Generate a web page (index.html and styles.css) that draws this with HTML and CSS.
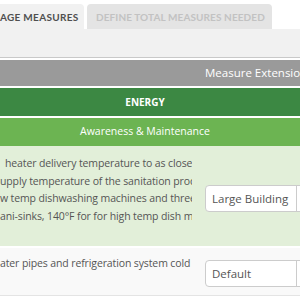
FILE: index.html
```html
<!DOCTYPE html>
<html>
<head>
<meta charset="utf-8">
<link rel="stylesheet" href="styles.css">
</head>
<body>
<div class="page">
  <div class="tabs">
    <div class="tab tab-active">AGE MEASURES</div>
    <div class="tab tab-idle">DEFINE TOTAL MEASURES NEEDED</div>
  </div>
  <div class="panel"></div>
  <div class="bar bar-gray">Measure Extension</div>
  <div class="bar bar-energy">ENERGY</div>
  <div class="bar bar-aware">Awareness &amp; Maintenance</div>
  <div class="row row-green">
    <div class="desc">
      <div class="line line-first">heater delivery temperature to as close</div>
      <div class="line">upply temperature of the sanitation process</div>
      <div class="line">w temp dishwashing machines and three</div>
      <div class="line">ani-sinks, 140°F for for high temp dish machines</div>
    </div>
    <div class="select select-first">
      <span class="select-text">Large Building</span>
      <span class="select-btn"><span class="caret"></span></span>
    </div>
  </div>
  <div class="row row-light">
    <div class="desc">
      <div class="line">ater pipes and refrigeration system cold</div>
    </div>
    <div class="select select-second">
      <span class="select-text">Default</span>
      <span class="select-btn"><span class="caret"></span></span>
    </div>
  </div>
</div>
</body>
</html>
```
FILE: styles.css
```css
html, body {
  margin: 0;
  padding: 0;
  background: #ffffff;
}
.page {
  width: 300px;
  height: 300px;
  overflow: hidden;
  font-family: "Open Sans", "Liberation Sans", sans-serif;
}
.tabs {
  display: flex;
  gap: 3px;
  padding-top: 4px;
  height: 25px;
}
.tab {
  height: 25px;
  box-sizing: border-box;
  border-radius: 4px 4px 0 0;
  font-family: "Lato", "DejaVu Sans", sans-serif;
  font-weight: 700;
  font-size: 10px;
  line-height: 27px;
  white-space: nowrap;
  overflow: hidden;
}
.tab-active {
  width: 84px;
  background: #f1f1f1;
  color: #4f4f4f;
  border-radius: 0 4px 0 0;
  letter-spacing: 0.3px;
}
.tab-idle {
  width: 185px;
  background: #e4e4e4;
  color: #c2c2c2;
  padding-left: 9px;
  letter-spacing: 0.1px;
}
.panel {
  height: 28px;
  background: #f1f1f1;
  border-bottom: 1px solid #c9c9c9;
  margin-bottom: 2px;
}
.bar {
  color: #ffffff;
  font-size: 10.5px;
  white-space: nowrap;
  box-sizing: border-box;
}
.bar-gray {
  height: 26px;
  line-height: 26px;
  background: #9a9a9a;
  padding-left: 205px;
  margin-bottom: 2px;
  font-size: 11.5px;
}
.bar-energy {
  height: 28px;
  line-height: 28px;
  background: #3c8843;
  font-weight: 700;
  font-size: 10px;
  text-align: center;
  padding-right: 10px;
  margin-bottom: 2px;
}
.bar-aware {
  height: 28px;
  line-height: 26px;
  background: #6cb452;
  text-align: center;
  padding-right: 10px;
  border-bottom: 2px solid #6cb452;
}
.row {
  display: flex;
  box-sizing: border-box;
}
.row-green {
  height: 102px;
  background: #e2efd9;
  padding-top: 9px;
  border-bottom: 2px solid #ffffff;
}
.row-light {
  height: 48px;
  background: #f9f9f9;
  padding-top: 7px;
  border-bottom: 1px solid #e4e4e4;
}
.desc {
  width: 192px;
  flex: none;
  overflow: hidden;
  color: #555555;
  font-size: 10.5px;
  line-height: 17.5px;
  letter-spacing: -0.12px;
}
.line {
  white-space: nowrap;
}
.line-first {
  padding-left: 5px;
}
.select {
  flex: none;
  margin-left: 13px;
  width: 120px;
  height: 27px;
  box-sizing: border-box;
  background: #ffffff;
  border: 1px solid #cccccc;
  border-radius: 4px;
  display: flex;
  align-items: center;
  color: #555555;
  font-size: 11.5px;
}
.select-first {
  margin-top: 30px;
}
.select-second {
  margin-top: 5px;
}
.select-text {
  padding-left: 6px;
  width: 84px;
  flex: none;
  white-space: nowrap;
}
.select-btn {
  height: 100%;
  border-left: 1px solid #cccccc;
  display: flex;
  align-items: center;
  padding-left: 3px;
}
.caret {
  width: 0;
  height: 0;
  border-left: 3px solid transparent;
  border-right: 3px solid transparent;
  border-top: 4px solid #333333;
}
```
